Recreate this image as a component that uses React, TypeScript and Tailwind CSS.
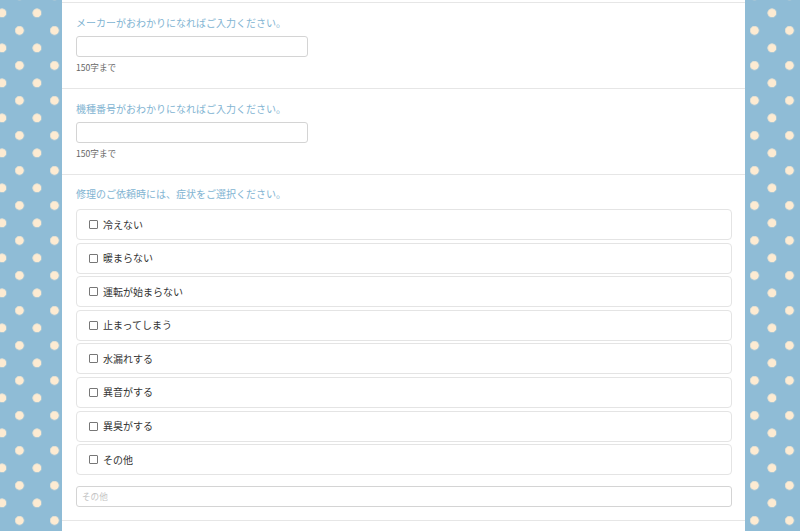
import React from "react";

const items = [
  "冷えない",
  "暖まらない",
  "運転が始まらない",
  "止まってしまう",
  "水漏れする",
  "異音がする",
  "異臭がする",
  "その他",
];

function TextSection({ label }: { label: string }) {
  return (
    <div className="border-t border-[#e6e6e6] pl-[14px] pr-[13px] pt-[13px] pb-[15px]">
      <div className="text-[10px] leading-[14px] text-[#82b4d2]">{label}</div>
      <div className="mt-[6px] h-[21px] w-[232px] rounded-[3px] border border-[#d4d4d4] bg-white" />
      <div className="mt-[4px] text-[8.6px] leading-[12px] text-[#666]">150字まで</div>
    </div>
  );
}

export default function App() {
  return (
    <div
      className="h-[531px] w-[800px] overflow-hidden bg-[#8fbcd6] [background-image:radial-gradient(circle_at_8.75px_8.75px,#fdebd2_4.1px,transparent_4.7px),radial-gradient(circle_at_26.25px_26.25px,#fdebd2_4.1px,transparent_4.7px)] [background-size:35px_35px] [background-position:-6.75px_4.25px]"
      style={{ fontFamily: '"Noto Sans CJK JP", "Noto Sans", sans-serif' }}
    >
      <div className="ml-[62px] h-full w-[683px] bg-white pt-[2px]">
        <TextSection label="メーカーがおわかりになればご入力ください。" />
        <TextSection label="機種番号がおわかりになればご入力ください。" />
        <div className="border-t border-b border-[#e6e6e6] pl-[14px] pr-[13px] pt-[12px] pb-[13px]">
          <div className="text-[10px] leading-[14px] text-[#82b4d2]">
            修理のご依頼時には、症状をご選択ください。
          </div>
          <div className="mt-[8px] flex flex-col gap-[2.6px]">
            {items.map((t) => (
              <div
                key={t}
                className="flex h-[31px] items-center rounded-[4px] border border-[#e4e4e4] pl-[12px]"
              >
                <span className="h-[9px] w-[9px] rounded-[1px] border border-[#777] bg-white" />
                <span className="ml-[5px] text-[10px] leading-[14px] text-[#333]">{t}</span>
              </div>
            ))}
          </div>
          <div className="mt-[11px] flex h-[21px] items-center rounded-[3px] border border-[#d4d4d4] pl-[5px] text-[8.6px] text-[#c4c4c4]">
            その他
          </div>
        </div>
      </div>
    </div>
  );
}
